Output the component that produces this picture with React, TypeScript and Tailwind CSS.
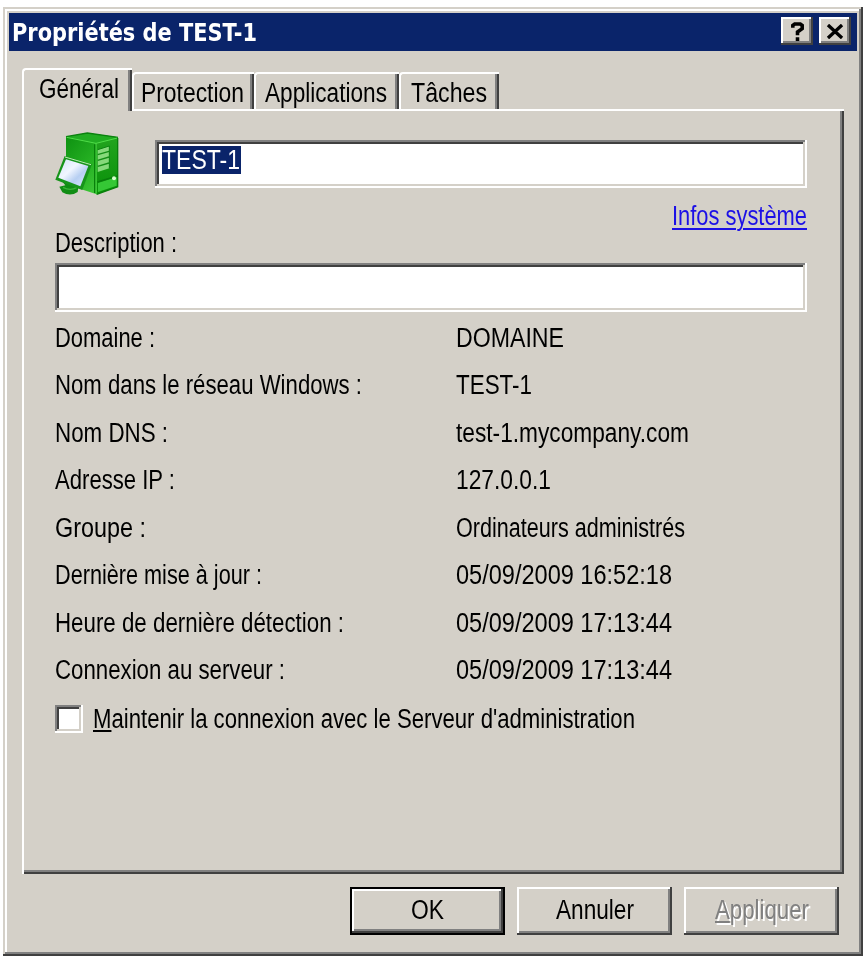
import {useLayoutEffect, useRef, useState} from "react";
import clsx from "clsx";

const rows = [
    {label: "Domaine :", labelWidth: 100, value: "DOMAINE", valueWidth: 108},
    {label: "Nom dans le réseau Windows :", labelWidth: 307, value: "TEST-1", valueWidth: 76},
    {label: "Nom DNS :", labelWidth: 113, value: "test-1.mycompany.com", valueWidth: 233},
    {label: "Adresse IP :", labelWidth: 120, value: "127.0.0.1", valueWidth: 95},
    {label: "Groupe :", labelWidth: 91, value: "Ordinateurs administrés", valueWidth: 229},
    {label: "Dernière mise à jour :", labelWidth: 207, value: "05/09/2009 16:52:18", valueWidth: 216},
    {label: "Heure de dernière détection :", labelWidth: 289, value: "05/09/2009 17:13:44", valueWidth: 216},
    {label: "Connexion au serveur :", labelWidth: 230, value: "05/09/2009 17:13:44", valueWidth: 216},
]

const tabs = [
    {name: "Protection", width: 103, className: "w-[122px] pl-[7px]"},
    {name: "Applications", width: 122, className: "w-[145px] pl-[9px]"},
    {name: "Tâches", width: 76, className: "w-[100px] pl-[10px]"},
]

// narrow dialog lettering: squeezes the text so it takes exactly `width` pixels
function Text({width, className = "", children}) {
    const ref = useRef<HTMLSpanElement>(null)
    const [scale, setScale] = useState(1)

    useLayoutEffect(() => {
        setScale(width / ref.current.getBoundingClientRect().width * scale)
    }, [width])

    return (
        <span className="block" style={{width}}>
            <span
                ref={ref}
                className={clsx("inline-block origin-left whitespace-pre", className)}
                style={{transform: `scaleX(${scale})`}}>
                {children}
            </span>
        </span>
    );
}

function ComputerIcon() {
    return (
        <svg className="h-[66px] w-[70px] shrink-0" viewBox="36 30 210 198">
            <defs>
                <linearGradient id="front" x1="0" y1="0" x2="1" y2="1">
                    <stop offset="0" stopColor="#0c8f10"/>
                    <stop offset=".5" stopColor="#27b324"/>
                    <stop offset="1" stopColor="#55d94c"/>
                </linearGradient>
                <linearGradient id="side" x1="0" y1="0" x2="0" y2="1">
                    <stop offset="0" stopColor="#23a41f"/>
                    <stop offset="1" stopColor="#089008"/>
                </linearGradient>
                <linearGradient id="screen" x1="0" y1="0" x2="1" y2="1">
                    <stop offset="0" stopColor="#d3e4fa"/>
                    <stop offset=".4" stopColor="#f1f6ff"/>
                    <stop offset=".65" stopColor="#b7cff2"/>
                    <stop offset="1" stopColor="#dbe9ff"/>
                </linearGradient>
            </defs>
            <path d="M78 47 142 36 234 49V197L170 220 78 190Z" fill="url(#front)"/>
            <path d="M78 47 142 36 234 49 168 66Z" fill="#21ad22"/>
            <path d="M168 66 234 49V197L170 220Z" fill="url(#side)"/>
            <path d="M78 47 142 36 234 49" fill="none" stroke="#0b820f" strokeWidth="4"/>
            <path d="M80 49 168 67 232 51M168 67V218" fill="none" stroke="#4fdd49" strokeWidth="3"/>
            <path d="M164 70V216M233 51V197L170 220" fill="none" stroke="#087f0b" strokeWidth="4"/>
            <path d="M173 86 208 75V142L173 153Z" fill="#86d97b"/>
            <path d="M173 101 207 91M173 118 207 108M173 136 207 126" stroke="#148d17" strokeWidth="4"/>
            <path d="M173 86 208 75V142" fill="none" stroke="#0a8410" strokeWidth="3"/>
            <path d="M174 186 230 168V194L174 213Z" fill="#35c735"/>
            <path d="M172 183 232 165" stroke="#087d0b" strokeWidth="4"/>
            <circle cx="222" cy="172" r="6" fill="#d9ffd0"/>
            <path d="M62 176 116 190 113 213Q91 228 67 214L58 197 76 193Z" fill="#108d14"/>
            <path d="M69 199Q91 211 111 199" fill="none" stroke="#3cb53a" strokeWidth="4"/>
            <path d="M74 105 156 130 127 207 46 176Z" fill="#17941b"/>
            <path d="M75 108 153 131" stroke="#b9edb1" strokeWidth="3"/>
            <path d="M78 115 145 135 121 196 55 170Z" fill="url(#screen)"/>
        </svg>
    );
}

function Button({width, isDefault = false, disabled = false, children}) {
    return (
        <button
            disabled={disabled}
            className={clsx(
                "flex h-[48px] w-[155px] items-center justify-center pb-[3px]",
                isDefault
                    ? "border-2 border-black shadow-[inset_-2px_-2px_#404040,inset_2px_2px_#fff,inset_-4px_-4px_#808080]"
                    : "shadow-[inset_-2px_-2px_#404040,inset_2px_2px_#fff,inset_-4px_-4px_#808080]",
                disabled && "text-[#808080] [text-shadow:2px_2px_#fff]"
            )}>
            <Text width={width}>{children}</Text>
        </button>
    );
}

const field = "bg-white shadow-[inset_-2px_-2px_#fff,inset_2px_2px_#808080,inset_-4px_-4px_#d4d0c8,inset_4px_4px_#404040]"
const captionButton = "flex h-[28px] w-[32px] items-center justify-center bg-[#d4d0c8] shadow-[inset_-2px_-2px_#404040,inset_2px_2px_#fff,inset_-4px_-4px_#808080]"

export default function App() {
    return (
        <div className="h-[957px] w-[868px] overflow-hidden bg-white pl-[3px] pt-[7px] font-['Liberation_Sans',sans-serif] text-[27px] leading-[30px] text-black">
            <div className="h-[949px] w-[860px] bg-[#d4d0c8] px-[6px] pt-[6px] shadow-[inset_-2px_-2px_#404040,inset_2px_2px_#d4d0c8,inset_-4px_-4px_#808080,inset_4px_4px_#fff]">
                <div className="flex h-[38px] items-center justify-between bg-[#0a246a] pl-[3px] pr-[6px]">
                    <Text width={245} className="font-['DejaVu_Sans',sans-serif] text-[24px] font-bold text-white">
                        Propriétés de TEST-1
                    </Text>
                    <div className="flex gap-[6px] pb-[2px]">
                        <button className={captionButton}>
                            <svg className="h-[19px] w-[15px]" viewBox="0 0 16 20">
                                <path d="M3 6V3.5L5 2H11L13 3.5V7L8 10.5V14M8 16V20" fill="none" stroke="black" strokeWidth="3.8"/>
                            </svg>
                        </button>
                        <button className={captionButton}>
                            <svg className="h-[15px] w-[18px]" viewBox="0 0 18 16">
                                <path d="M1.5 1 16.5 15M16.5 1 1.5 15" fill="none" stroke="black" strokeWidth="3.5"/>
                            </svg>
                        </button>
                    </div>
                </div>

                <div className="pl-[13px] pt-[17px]">
                    <div className="flex h-[41px] items-end">
                        <div className="relative z-10 -mb-[2px] h-[43px] w-[110px] rounded-tl-[4px] border-l-2 border-t-2 border-white bg-[#d4d0c8] pl-[15px] pt-[4px] shadow-[inset_-2px_0_#404040,inset_-4px_0_#808080]">
                            <Text width={80}>Général</Text>
                        </div>
                        {tabs.map(tab => (
                            <div
                                key={tab.name}
                                className={clsx("h-[37px] rounded-tl-[4px] border-l-2 border-t-2 border-white pt-[4px] shadow-[inset_-2px_0_#404040,inset_-4px_0_#808080]", tab.className)}>
                                <Text width={tab.width}>{tab.name}</Text>
                            </div>
                        ))}
                    </div>

                    <div className="h-[765px] w-[822px] border-l-2 border-t-2 border-white pl-[31px] pt-[20px] shadow-[inset_-2px_-2px_#404040,inset_-4px_-4px_#808080]">
                        <div className="flex h-[70px] w-[752px] justify-between">
                            <div className="-ml-[3px]">
                                <ComputerIcon/>
                            </div>
                            <div className={clsx("mt-[9px] h-[48px] w-[652px] pl-[7px] pt-[6px]", field)}>
                                <div className="h-[28px] w-[79px] bg-[#0a246a] text-white leading-[28px]">
                                    <Text width={78}>TEST-1</Text>
                                </div>
                            </div>
                        </div>
                        <div className="flex w-[752px] justify-end text-[#1c10e6]">
                            <a>
                                <Text width={135} className="underline decoration-2 underline-offset-[3px]">Infos système</Text>
                            </a>
                        </div>
                        <div className="-mt-[3px]">
                            <Text width={122}>Description :</Text>
                        </div>
                        <div className={clsx("mt-[5px] h-[49px] w-[752px]", field)}/>

                        <div className="pt-[2px]">
                            {rows.map(row => (
                                <div key={row.label} className="flex h-[47.5px] items-center">
                                    <div className="w-[401px]">
                                        <Text width={row.labelWidth}>{row.label}</Text>
                                    </div>
                                    <Text width={row.valueWidth}>{row.value}</Text>
                                </div>
                            ))}
                        </div>

                        <div className="mt-[10px] flex h-[30px] items-center gap-[10px]">
                            <div className={clsx("h-[28px] w-[28px]", field)}/>
                            <Text width={542}>
                                <span className="underline decoration-2 underline-offset-2">M</span>aintenir la connexion avec le Serveur d'administration
                            </Text>
                        </div>
                    </div>
                </div>

                <div className="flex justify-end gap-[12px] pr-[18px] pt-[13px]">
                    <Button width={33} isDefault>OK</Button>
                    <Button width={78}>Annuler</Button>
                    <Button width={94} disabled>
                        <span className="underline decoration-2 underline-offset-2">A</span>ppliquer
                    </Button>
                </div>
            </div>
        </div>
    );
}
